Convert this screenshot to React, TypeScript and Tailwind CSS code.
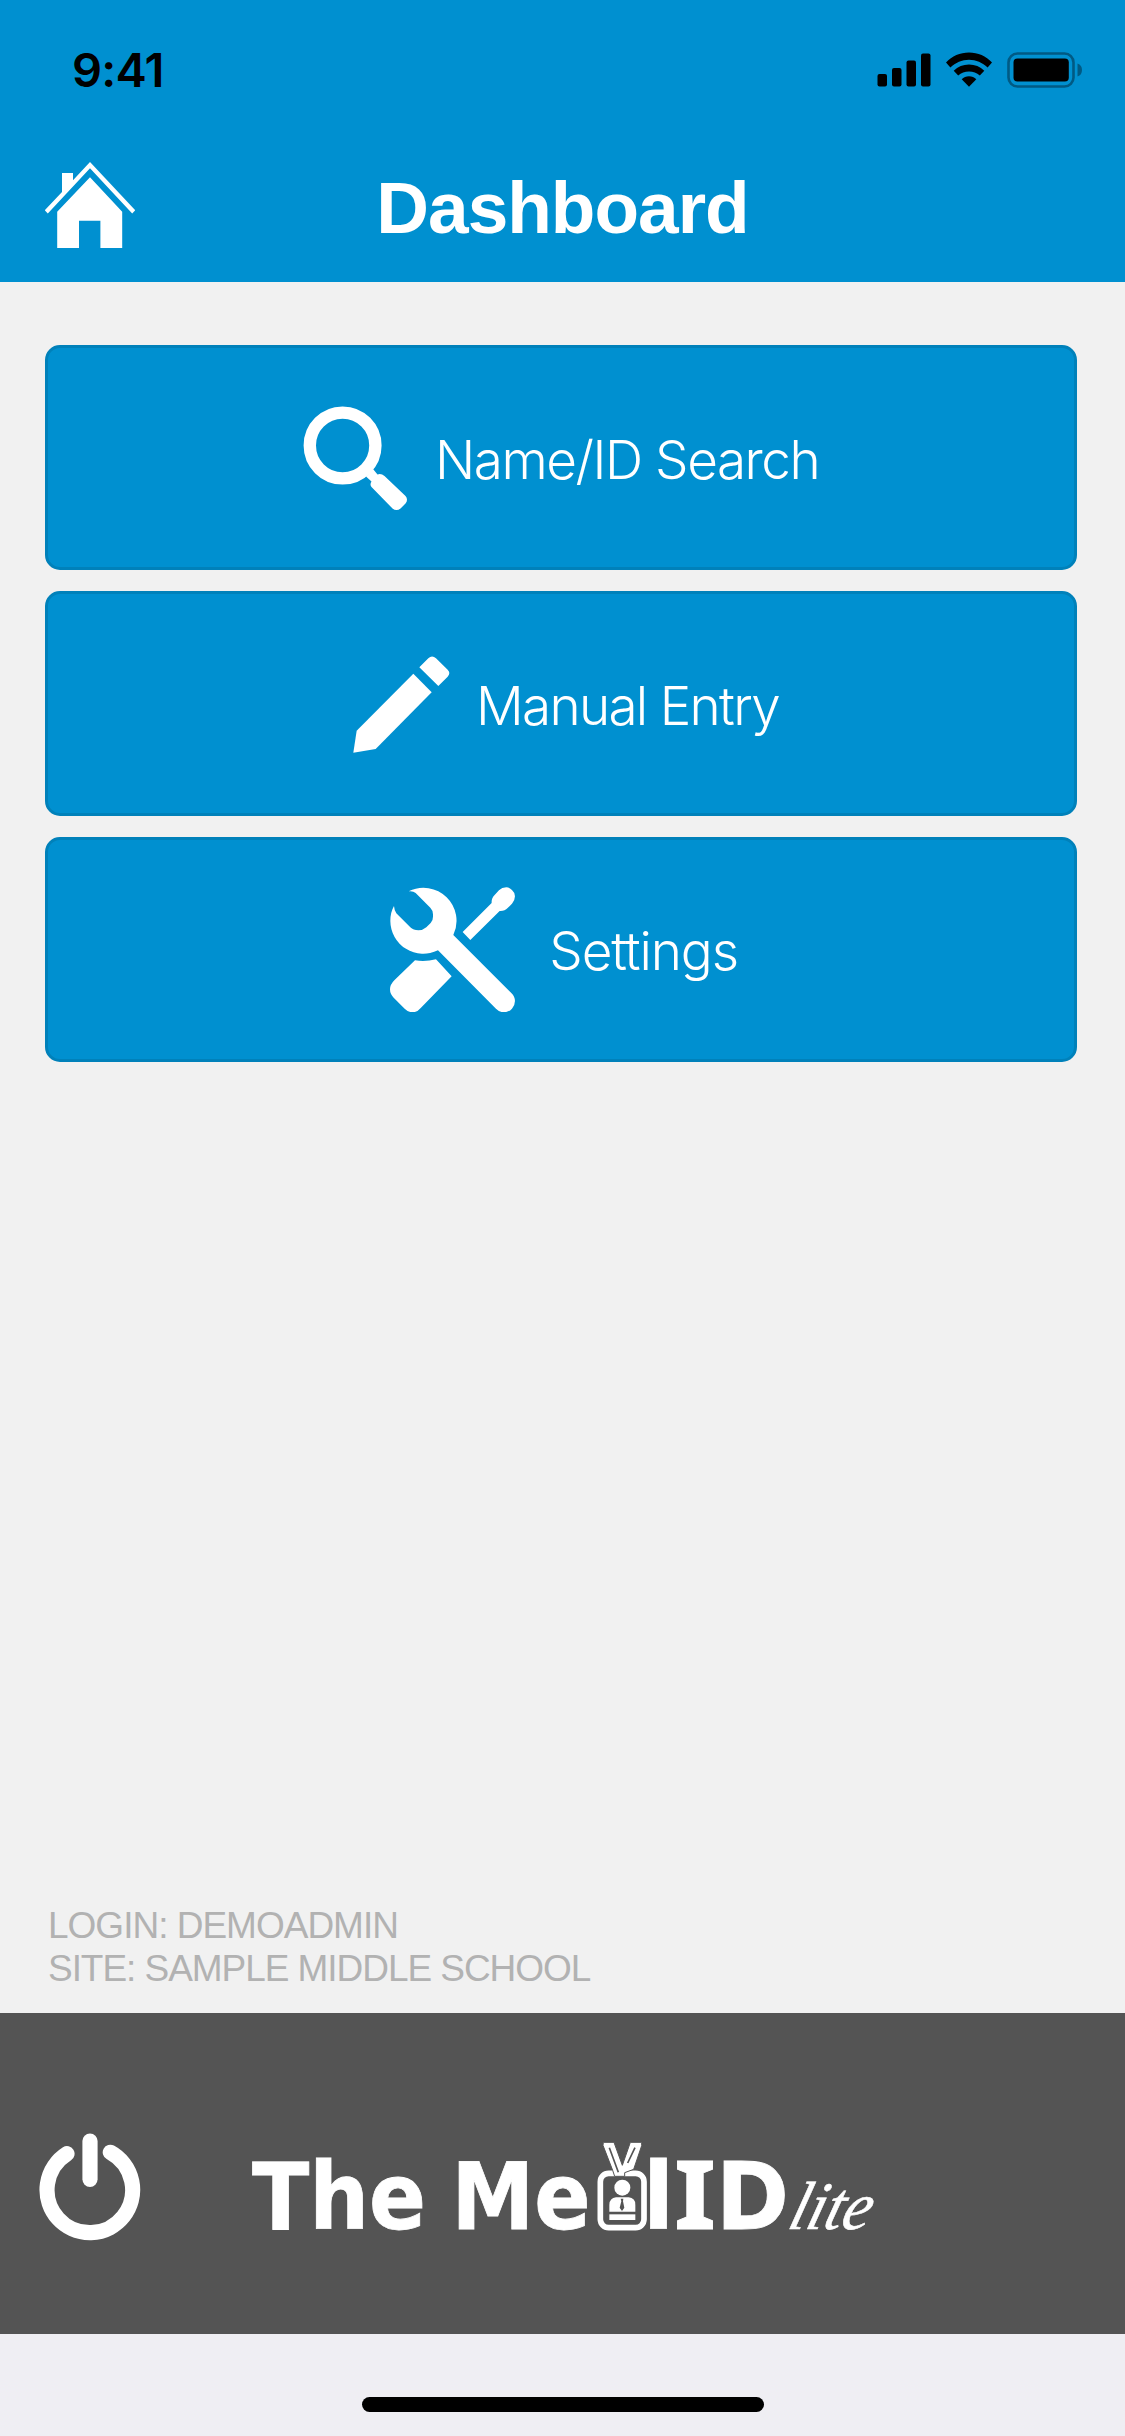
import type { ReactNode } from "react";

interface MenuItem {
  key: string;
  label: string;
  labelClass: string;
  rowClass: string;
  icon: ReactNode;
}

function SignalIcon() {
  return (
    <svg width="54" height="36" viewBox="0 0 54 36">
      <rect x="0.5" y="22" width="9.5" height="12.5" rx="2" />
      <rect x="15" y="16" width="9.5" height="18.5" rx="2" />
      <rect x="29.5" y="8.5" width="9.5" height="26" rx="2" />
      <rect x="44" y="1.5" width="9.5" height="33" rx="2" />
    </svg>
  );
}

function WifiIcon() {
  return (
    <svg width="46" height="36" viewBox="0 0 46 36">
      <path d="M0 10.5C6 4 14 .5 23 .5S40 4 46 10.5l-4.4 5C36.5 10.5 30 7.7 23 7.7S9.500 10.500 4.400 15.500Z" />
      <path d="M7.700 18.700C12 14.500 17 12.400 23 12.400s11 2.100 15.300 6.300L33.800 23.600C30.800 20.900 27.200 19.500 23 19.500s-7.800 1.400-10.800 4.100Z" />
      <path d="M15.700 27.200C17.700 25.300 20.100 24.300 23 24.300s5.300 1 7.300 2.900L23 34.800Z" />
    </svg>
  );
}

function BatteryIcon() {
  return (
    <svg width="76" height="36" viewBox="0 0 76 36">
      <rect x="1.5" y="1.5" width="65" height="33" rx="9" fill="none" stroke="#005a84" strokeWidth="2.6" />
      <rect x="6.5" y="6.5" width="55.3" height="23" rx="4" />
      <path d="M70.500 11.500q4.500 1.500 4.500 6.500t-4.500 6.500Z" fill="#005a84" />
    </svg>
  );
}

function HomeIcon() {
  return (
    <svg width="90" height="87" viewBox="45 162 90 87" fill="#fff">
      <path d="M90 162 135.200 210.300 132.200 213.600 90 168.300 47.800 213.600 44.800 210.300 62 192V173H73V180.200Z" />
      <path d="M90 177.300 122.200 211.800V248H100.400V220.700H79V248H57.200V211.800Z" />
    </svg>
  );
}

function SearchIcon() {
  return (
    <svg width="104" height="105" viewBox="303 406.500 104 105" fill="#fff">
      <ellipse cx="342.600" cy="446" rx="32.800" ry="32.900" fill="none" stroke="#fff" strokeWidth="12.400" />
      <path d="M366 477 373 469.500 377.500 475Q381 473.500 384.500 476.500L405.500 496.500Q408.500 500 405.500 504L400.500 509Q396.500 512 392.500 509L371.500 487.500Q369.500 485 371.500 482Z" />
    </svg>
  );
}

function PencilIcon() {
  return (
    <svg width="97" height="97" viewBox="68 108 291 291" fill="#fff">
      <path d="M249 161 304 217 136 387 69 398 79 332Z" />
      <path d="M267 142 294 115Q305 104 317 115L352 149Q362 159 352 170L324 198Z" />
    </svg>
  );
}

function ToolsIcon() {
  return (
    <svg width="125.3" height="125.3" viewBox="91 80 376 376" fill="#fff">
      <path d="M147 93Q160 91 168 98L212 142Q221 151 220 165Q221 180 213 188L200 201Q190 210 176 210Q161 210 152 201L110 159Q104 151 103 137Q92 156 92 182A99 99 0 0 0 235 270L409 445Q420 456 433 456Q448 455 457 445Q466 435 466 422Q466 409 455 398L281 224A99 99 0 0 0 147 93Z" />
      <path d="M309 215 332 239 420 152Q435 153 444 143L457 130Q466 120 466 108Q466 97 457 89Q449 81 440 81Q427 81 418 90L405 104Q395 113 396 128Z" />
      <path d="M166 300Q197 305 229 297L276 348 184 442Q172 456 159 456Q146 456 135 445L102 412Q91 401 91 387Q91 373 104 360Z" />
    </svg>
  );
}

function PowerIcon() {
  return (
    <svg width="102" height="108" viewBox="39 2133 102 108" fill="none" stroke="#fff" strokeWidth="15.2" strokeLinecap="round">
      <path d="M67 2153.700A42.800 42.800 0 1 0 110.300 2152.300" />
      <path d="M90 2141V2179.300" />
    </svg>
  );
}

function BrandLogo() {
  return (
    <svg width="680" height="160" viewBox="240 2115 680 160" fill="#fff">
      <g
        fontFamily="'DejaVu Sans', sans-serif"
        fontWeight="700"
        fontSize="92.500"
        stroke="#fff"
        strokeWidth="0.8"
      >
        <text x="252" y="2229.300" textLength="174" lengthAdjust="spacingAndGlyphs">The</text>
        <text x="451.500" y="2229.300" textLength="139" lengthAdjust="spacingAndGlyphs">Me</text>
        <text x="643" y="2229.300" textLength="31" lengthAdjust="spacingAndGlyphs">l</text>
        <text x="674" y="2229.300" textLength="42" lengthAdjust="spacingAndGlyphs" fontFamily="'Noto Sans', sans-serif" fontSize="94.500">I</text>
        <text x="716" y="2229.300" textLength="73" lengthAdjust="spacingAndGlyphs">D</text>
      </g>
      <text
        x="786"
        y="2229.500"
        textLength="81"
        lengthAdjust="spacingAndGlyphs"
        fontFamily="'Liberation Serif', serif"
        fontStyle="italic"
        fontSize="68"
        stroke="#fff"
        strokeWidth="0.6"
        transform="translate(892 0) skewX(-16) translate(-252.500 0)"
      >
        lite
      </text>
      {/* id badge on a lanyard */}
      <g transform="translate(560 2130) scale(0.33333)">
        <rect x="121" y="130" width="131" height="163" rx="25" fill="none" stroke="#fff" strokeWidth="17" />
        <path d="M130 37H162L187 106 211 37H245V47L221 118 194 128V139H164L158 121 129 46Z" stroke="#545454" strokeWidth="3" />
        <path d="M148 53 175 127M225 53 203 99" stroke="#545454" strokeWidth="5" fill="none" />
        <circle cx="187" cy="173" r="24" />
        <path d="M148 245V224Q149 204 168 202H206Q226 204 226 224V245Z" />
        <path d="M148 253H226V270H148Z" />
        <path d="M182 206H190L189 214 193 233 186 243 179 233 184 214Z" fill="#545454" />
      </g>
    </svg>
  );
}

const MENU: MenuItem[] = [
  {
    key: "search",
    label: "Name/ID Search",
    labelClass: "ml-[28px] mt-[2px] tracking-[-1.45px]",
    rowClass: "pl-[255px] pt-[2px]",
    icon: <SearchIcon />,
  },
  {
    key: "manual",
    label: "Manual Entry",
    labelClass: "ml-[26px] mt-[2px] tracking-[-1.7px]",
    rowClass: "pl-[305px] pt-[2px]",
    icon: <PencilIcon />,
  },
  {
    key: "settings",
    label: "Settings",
    labelClass: "ml-[34px] mt-[3px] tracking-[-1.1px]",
    rowClass: "pl-[342px]",
    icon: <ToolsIcon />,
  },
];

function MenuButton({ item }: { item: MenuItem }) {
  return (
    <button
      className={`flex h-[225px] w-full items-center rounded-[15px] border-[3px] border-[#0081ba] bg-[#0090d0] text-white ${item.rowClass}`}
    >
      <span className="shrink-0">{item.icon}</span>
      <span className={`whitespace-nowrap font-['Inter',sans-serif] text-[53px] font-light leading-[64px] ${item.labelClass}`}>
        {item.label}
      </span>
    </button>
  );
}

export default function App() {
  return (
    <div className="flex h-[2436px] w-[1125px] flex-col overflow-hidden bg-[#f1f1f1]">
      <header className="h-[282px] shrink-0 bg-[#0090d0]">
        <div className="flex h-[139px] items-center justify-between pl-[72px] pr-[42px]">
          <span className="font-['Inter',sans-serif] text-[47px] font-semibold leading-none tracking-[-0.8px] text-black">9:41</span>
          <div className="flex items-center">
            <SignalIcon />
            <span className="ml-[15px]"><WifiIcon /></span>
            <span className="ml-[15px]"><BatteryIcon /></span>
          </div>
        </div>
        <div className="grid h-[132px] grid-cols-[90px_1fr_90px] items-center px-[45px]">
          <HomeIcon />
          <h1 className="pt-[6px] text-center font-['Liberation_Sans',sans-serif] text-[73px] font-bold leading-[84px] tracking-[-1px] text-white">
            Dashboard
          </h1>
        </div>
      </header>

      <main className="flex flex-1 flex-col justify-between pb-[23px] pl-[45px] pr-12 pt-[63px]">
        <nav className="flex flex-col gap-[21px]">
          {MENU.map((item) => (
            <MenuButton key={item.key} item={item} />
          ))}
        </nav>
        <div className="pl-[3px] font-['Liberation_Sans',sans-serif] text-[37px] leading-[43px] text-[#b2b2b2]">
          <p className="tracking-[-1px]">LOGIN: DEMOADMIN</p>
          <p className="tracking-[-1.05px]">SITE: SAMPLE MIDDLE SCHOOL</p>
        </div>
      </main>

      <footer className="flex h-[321px] shrink-0 items-start bg-[#545454] pl-[39px] pt-[102px]">
        <span className="mt-[18px]"><PowerIcon /></span>
        <span className="ml-[99px]"><BrandLogo /></span>
      </footer>

      <div className="flex h-[102px] shrink-0 items-end justify-center bg-[#efeef3] pb-6">
        <div className="h-[15px] w-[402px] rounded-full bg-black" />
      </div>
    </div>
  );
}
